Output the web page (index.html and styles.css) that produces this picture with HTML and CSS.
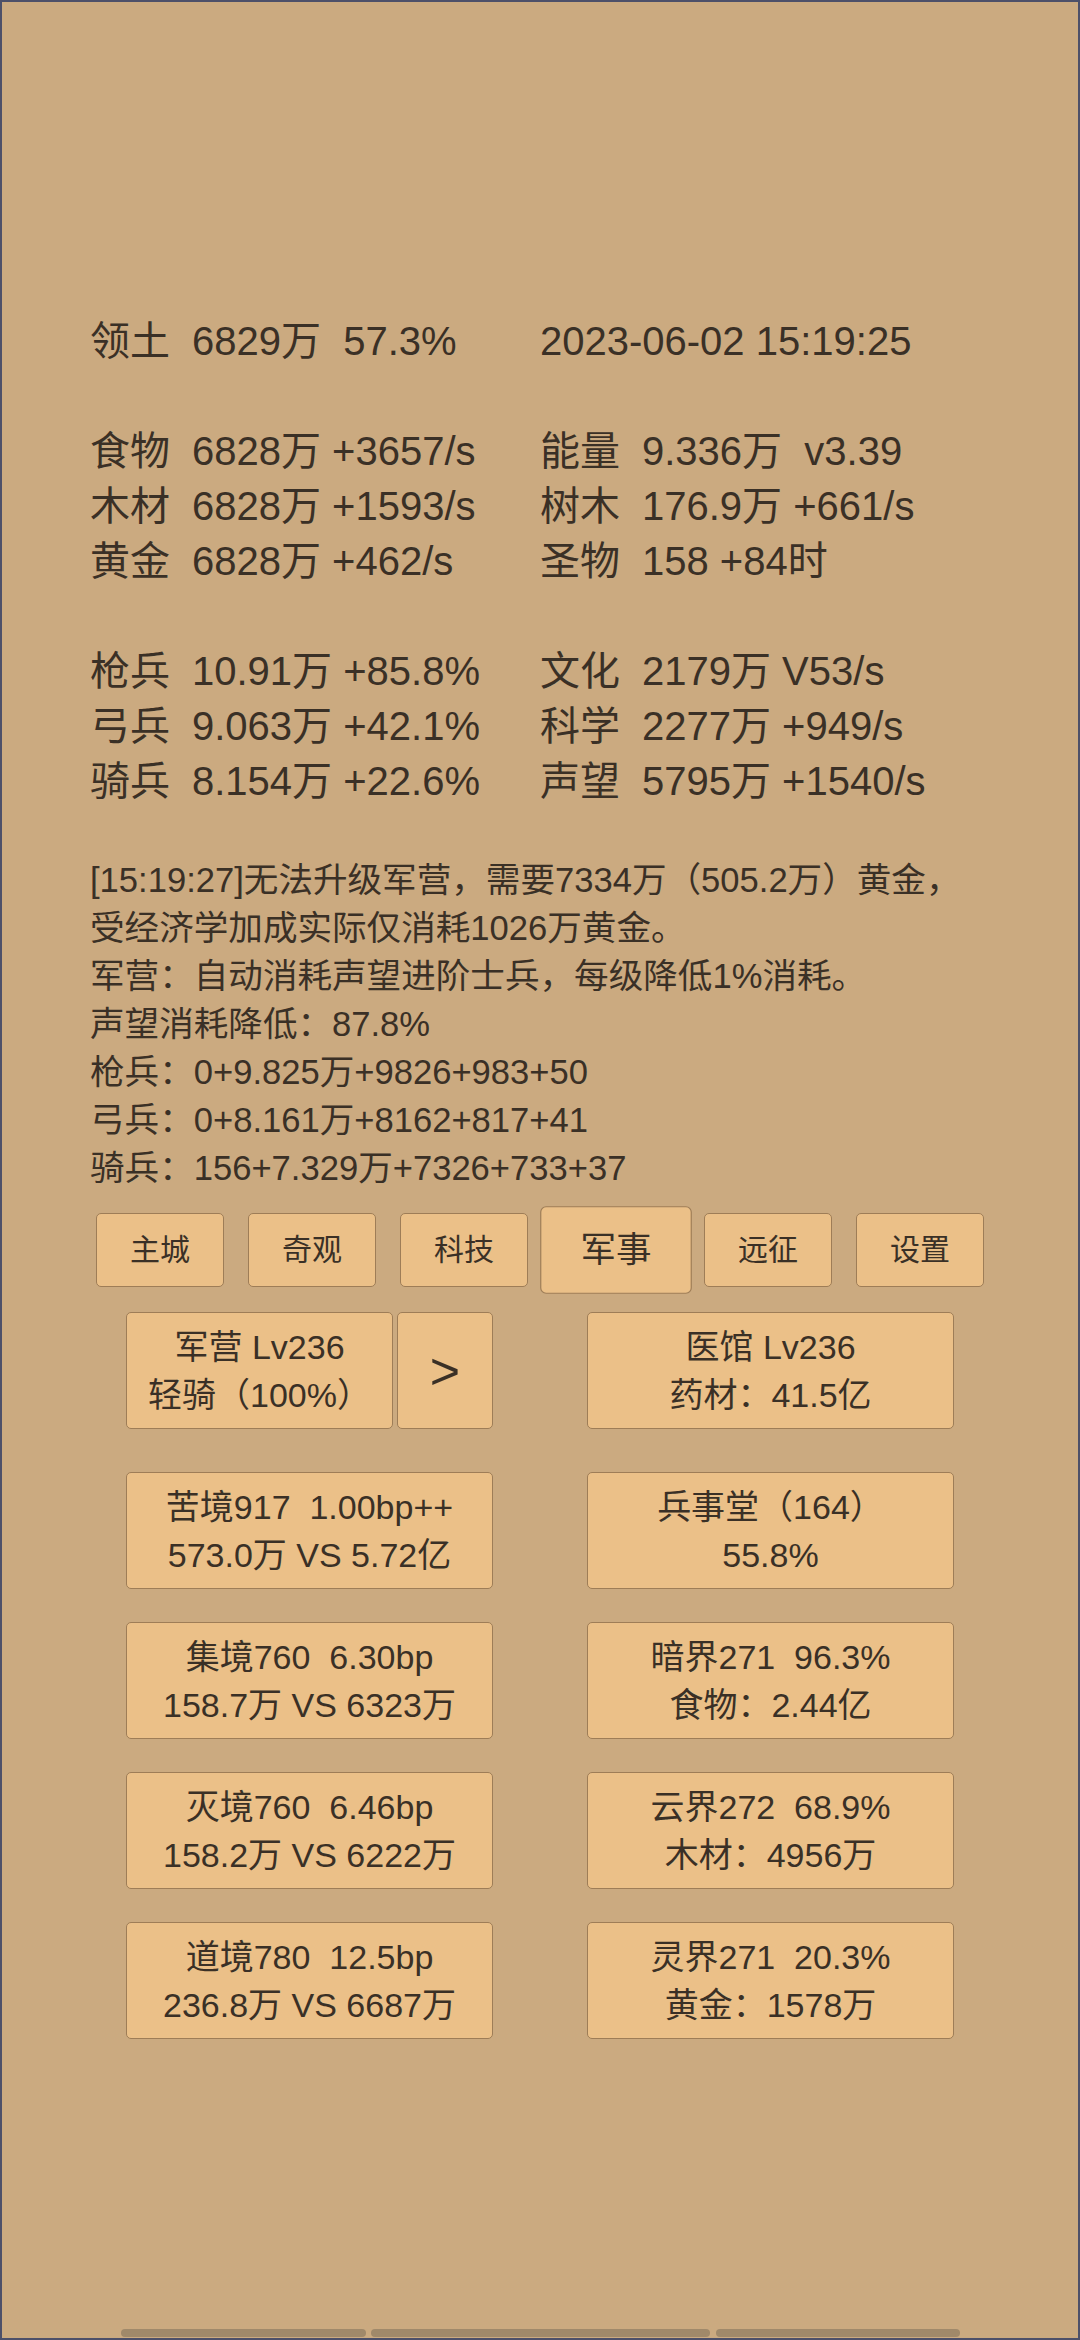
FILE: index.html
```html
<!DOCTYPE html>
<html lang="zh-CN">
<head>
<meta charset="utf-8">
<title>军事</title>
<link rel="stylesheet" href="styles.css">
</head>
<body>
<div class="screen">
  <section class="stats">
    <div class="cell"><span class="k">领土</span><span class="v">6829万  57.3%</span></div>
    <div class="cell"><span class="v">2023-06-02 15:19:25</span></div>
    <div class="cell"></div><div class="cell"></div>
    <div class="cell"><span class="k">食物</span><span class="v">6828万 +3657/s</span></div>
    <div class="cell"><span class="k">能量</span><span class="v">9.336万  v3.39</span></div>
    <div class="cell"><span class="k">木材</span><span class="v">6828万 +1593/s</span></div>
    <div class="cell"><span class="k">树木</span><span class="v">176.9万 +661/s</span></div>
    <div class="cell"><span class="k">黄金</span><span class="v">6828万 +462/s</span></div>
    <div class="cell"><span class="k">圣物</span><span class="v">158 +84时</span></div>
    <div class="cell"></div><div class="cell"></div>
    <div class="cell"><span class="k">枪兵</span><span class="v">10.91万 +85.8%</span></div>
    <div class="cell"><span class="k">文化</span><span class="v">2179万 V53/s</span></div>
    <div class="cell"><span class="k">弓兵</span><span class="v">9.063万 +42.1%</span></div>
    <div class="cell"><span class="k">科学</span><span class="v">2277万 +949/s</span></div>
    <div class="cell"><span class="k">骑兵</span><span class="v">8.154万 +22.6%</span></div>
    <div class="cell"><span class="k">声望</span><span class="v">5795万 +1540/s</span></div>
  </section>

  <section class="log">
    <p>[15:19:27]无法升级军营，需要7334万（505.2万）黄金，</p>
    <p>受经济学加成实际仅消耗1026万黄金。</p>
    <p>军营：自动消耗声望进阶士兵，每级降低1%消耗。</p>
    <p>声望消耗降低：87.8%</p>
    <p>枪兵：0+9.825万+9826+983+50</p>
    <p>弓兵：0+8.161万+8162+817+41</p>
    <p>骑兵：156+7.329万+7326+733+37</p>
  </section>

  <nav class="tabs">
    <button class="tab">主城</button>
    <button class="tab">奇观</button>
    <button class="tab">科技</button>
    <button class="tab active">军事</button>
    <button class="tab">远征</button>
    <button class="tab">设置</button>
  </nav>

  <section class="cards">
    <div class="card-row first">
      <div class="group">
        <div class="card camp"><span>军营 Lv236</span><span>轻骑（100%）</span></div>
        <div class="card next"><span class="chev">&gt;</span></div>
      </div>
      <div class="card"><span>医馆 Lv236</span><span>药材：41.5亿</span></div>
    </div>
    <div class="card-row">
      <div class="card"><span>苦境917  1.00bp++</span><span>573.0万 VS 5.72亿</span></div>
      <div class="card"><span>兵事堂（164）</span><span>55.8%</span></div>
    </div>
    <div class="card-row">
      <div class="card"><span>集境760  6.30bp</span><span>158.7万 VS 6323万</span></div>
      <div class="card"><span>暗界271  96.3%</span><span>食物：2.44亿</span></div>
    </div>
    <div class="card-row">
      <div class="card"><span>灭境760  6.46bp</span><span>158.2万 VS 6222万</span></div>
      <div class="card"><span>云界272  68.9%</span><span>木材：4956万</span></div>
    </div>
    <div class="card-row">
      <div class="card"><span>道境780  12.5bp</span><span>236.8万 VS 6687万</span></div>
      <div class="card"><span>灵界271  20.3%</span><span>黄金：1578万</span></div>
    </div>
  </section>

  <div class="home-bars">
    <span class="bar b1"></span>
    <span class="bar b2"></span>
    <span class="bar b3"></span>
  </div>
</div>
</body>
</html>
```

FILE: styles.css
```css
* { box-sizing: border-box; }

html, body {
  margin: 0;
  padding: 0;
  background: #cbaa80;
}

.screen {
  width: 1080px;
  height: 2340px;
  border: 2px solid #4d5069;
  background: #cbaa80;
  color: #3a3026;
  font-family: "Liberation Sans", "Noto Sans CJK SC", sans-serif;
  display: flex;
  flex-direction: column;
  padding-top: 312px;
  padding-bottom: 1px;
}

.stats {
  display: grid;
  grid-template-columns: 450px 1fr;
  grid-auto-rows: 55px;
  padding-left: 88px;
  font-size: 40px;
  line-height: 55px;
}

.cell {
  white-space: pre;
}

.k {
  display: inline-block;
  width: 102px;
}

.log {
  margin-top: 47px;
  padding-left: 88px;
  font-size: 34.6px;
  line-height: 48px;
}

.log p {
  margin: 0;
  white-space: pre;
}

.tabs {
  margin-top: 21px;
  display: flex;
  justify-content: center;
  gap: 24px;
}

.tab {
  width: 128px;
  height: 74px;
  padding: 0;
  background: #ebc088;
  border: 1.5px solid #9e7d57;
  border-radius: 5px;
  color: #3a3026;
  font-family: "Liberation Sans", "Noto Sans CJK SC", sans-serif;
  font-size: 30px;
  line-height: 1;
}

.tab.active {
  transform: scale(1.185);
}

.cards {
  margin-top: 25px;
  display: flex;
  flex-direction: column;
  align-items: center;
  gap: 33px;
}

.card-row {
  display: flex;
  gap: 94px;
}

.card-row.first {
  margin-bottom: 10px;
}

.group {
  display: flex;
  gap: 4px;
  width: 367px;
}

.card {
  width: 367px;
  height: 117px;
  background: #ebc088;
  border: 1.5px solid #9e7d57;
  border-radius: 5px;
  display: flex;
  flex-direction: column;
  align-items: center;
  justify-content: center;
  font-size: 34px;
  line-height: 48px;
  white-space: pre;
}

.card.camp {
  width: 267px;
}

.card.next {
  width: 96px;
}

.chev {
  font-size: 52px;
  line-height: 1;
}

.home-bars {
  margin-top: auto;
  display: flex;
  justify-content: center;
  gap: 5.5px;
}

.bar {
  display: block;
  height: 8px;
  border-radius: 4px;
  background: #a0896a;
}

.b1 { width: 245px; }
.b2 { width: 339px; }
.b3 { width: 244px; }
```
